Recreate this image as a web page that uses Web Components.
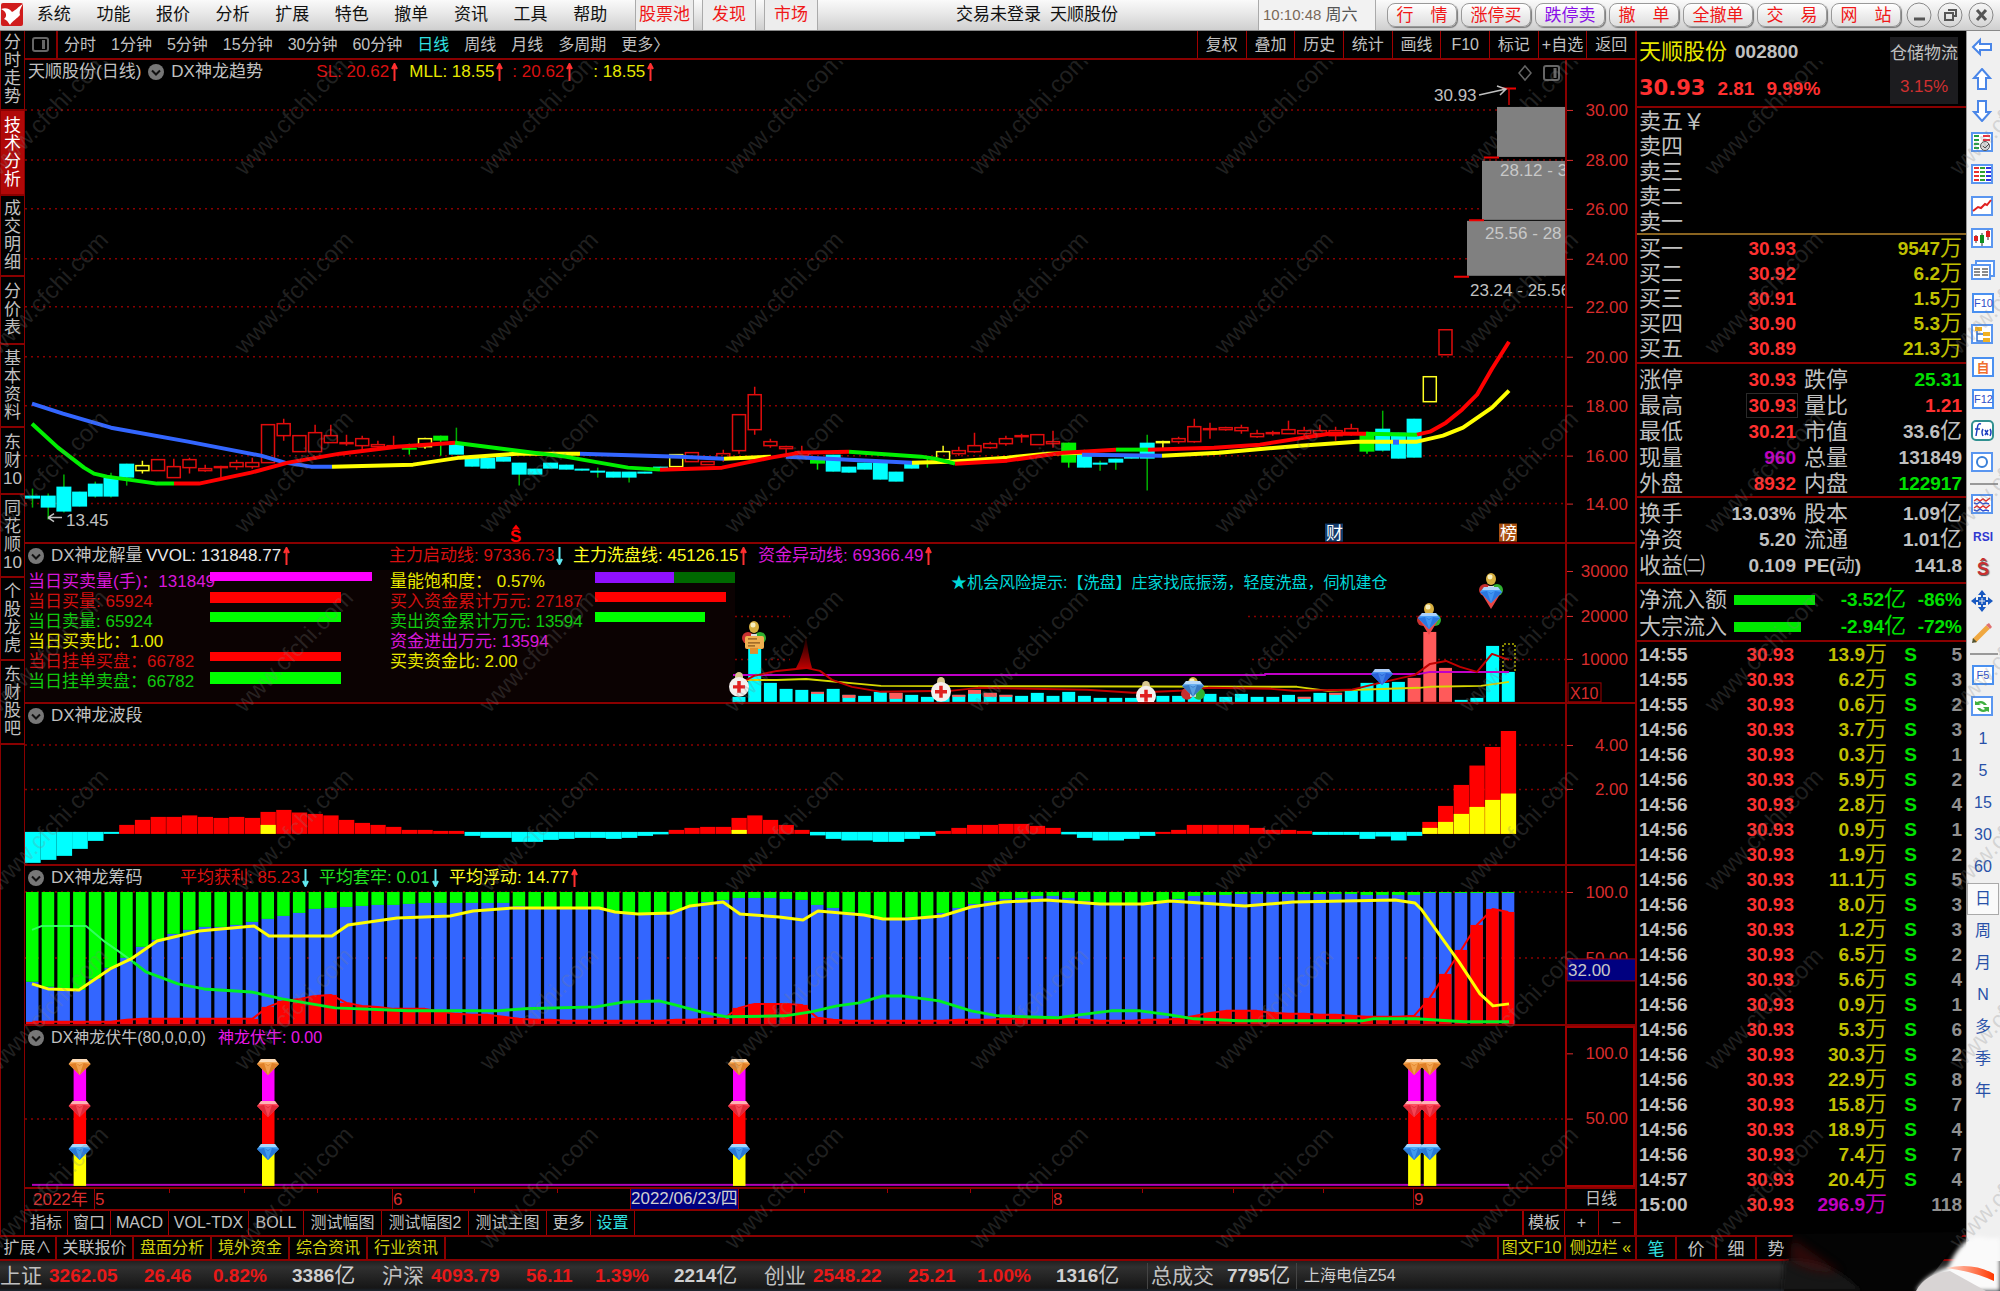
<!DOCTYPE html>
<html lang="zh-CN">
<head>
<meta charset="utf-8">
<title>天顺股份 002800 技术分析</title>
<style>
html,body{margin:0;background:#000;overflow:hidden}
body{font:16px/20px "Liberation Sans","Noto Sans CJK SC",sans-serif;color:#c0c0c0}
</style>
</head>
<body>
<trading-app></trading-app>
<script>
const BASE = `<style>
*{box-sizing:border-box}
:host{display:block;min-width:0;min-height:0}
button{font:inherit;color:inherit;background:none;border:0;padding:0;margin:0;cursor:pointer;white-space:nowrap}
svg{display:block}
table{border-collapse:collapse}td{padding:0}
</style>`;
function define(name, render){
  customElements.define(name, class extends HTMLElement{
    constructor(){ super(); this.attachShadow({mode:'open'}); }
    connectedCallback(){ this.shadowRoot.innerHTML = BASE + render(this); }
  });
}
const R = (x,y,w,h,f,extra='') => `<rect x="${x}" y="${y}" width="${w}" height="${h}" fill="${f}" ${extra}/>`;
const L = (pts,c,w=4) => `<polyline points="${pts}" fill="none" stroke="${c}" stroke-width="${w}" stroke-linejoin="round"/>`;
const X = i => 32.5 + 15.7*i;

/* ---------- title bar ---------- */
define('title-bar', () => `<style>
:host{display:flex;height:31px;flex:none;background:linear-gradient(#fafafa,#e6e6e6 50%,#cfcfcf);border-bottom:1px solid #888;color:#111;align-items:stretch;font-size:17px;line-height:24px}
.logo{width:24px;padding-top:3px}
nav{display:flex;width:596px}nav button{flex:1}
.pool{display:flex;gap:8px;margin-left:15px;color:#f01818}
.pool button{border:solid #aaa;border-width:0 1px;background:#ededed;padding:0 3px}
.pool button+button{padding:0 9px}
.mid{flex:1;display:flex;justify-content:flex-end;gap:9px;align-items:center;padding-right:140px}
.clock{width:118px;border:solid #aaa;border-width:0 1px;background:#f2f2f2;color:#7a6858;display:flex;gap:4px;align-items:center;padding-left:4px;font-size:15px}
.clock span{font-size:16px;color:#555}
.acts{display:flex;gap:4px;align-items:center;padding-left:11px;color:#f01818}
.acts button{width:70px;height:24px;border:1px solid #999;border-radius:8px;background:linear-gradient(#fff,#ddd);box-shadow:1px 1px 1px #777}
.acts .p{color:#8a10e8}
.win{display:flex;gap:5px;align-items:center;padding:0 6px 0 5px}
</style>
<div class="logo"><svg width="24" height="24"><rect x="1" width="22" height="23" rx="2" fill="#d01c1c"/><path d="M1 6c5-2 9 0 11 3 4-2 6-5 11-8-3 5-4 8-3 11-3 4-7 5-10 10-2-3-3-5-6-6 4-3 2-8-3-10z" fill="#fff"/></svg></div>
<nav>${['系统','功能','报价','分析','扩展','特色','撤单','资讯','工具','帮助'].map(t=>`<button>${t}</button>`).join('')}</nav>
<div class="pool"><button>股票池</button><button>发现</button><button>市场</button></div>
<div class="mid"><span>交易未登录</span><span>天顺股份</span></div>
<div class="clock">10:10:48<span>周六</span></div>
<div class="acts">${['行　情','涨停买','跌停卖','撤　单','全撤单','交　易','网　站'].map((t,i)=>`<button class="${i==2?'p':''}">${t}</button>`).join('')}</div>
<div class="win">${['<path d="M8 18h11" stroke-width="3"/>','<path d="M11 9h8v6h-3M8 12h8v7h-8z" stroke-width="2"/>','<path d="M9 9l9 10M18 9l-9 10" stroke-width="3"/>'].map((p,i)=>`<button aria-label="${['最小化','还原','关闭'][i]}"><svg width="26" height="28" fill="none" stroke="#555"><circle cx="13" cy="14" r="12" stroke="#888"/>${p}</svg></button>`).join('')}</div>`);

/* ---------- left tabs ---------- */
define('side-tabs', () => `<style>
:host{display:flex;flex-direction:column;width:25px;border:solid #8a0000;border-width:0 1px}
button{border-bottom:2px solid #8a0000;display:grid;place-items:center;white-space:normal;font-size:17px;line-height:18px}
button span{width:19px;word-break:normal}
.on{background:#b00808;color:#fff}
</style>${[['分时走势',80],['技术分析',85],['成交明细',81],['分价表',68],['基本资料',83],['东财10',67],['同花顺10',83],['个股龙虎',83],['东财股吧',84]].map(([t,h],i)=>`<button class="${i==1?'on':''}" style="height:${h}px"><span>${t}</span></button>`).join('')}`);

/* ---------- period bar ---------- */
define('period-bar', () => `<style>
:host{display:flex;height:29px;flex:none;border-bottom:2px solid #8a0000;align-items:stretch}
.ic{width:33px;border-right:2px solid #8a0000;padding:6px 0 0 7px}
.l{display:flex;gap:15px;padding-left:6px;flex:1}.l .on{color:#30e0e0}
.r{display:flex;width:438px}.r button{flex:1 1 auto;width:48px;border-left:1px solid #a00000}
</style><div class="ic"><svg width="17" height="16" fill="none" stroke="#666" stroke-width="2"><rect x="1" y="1" width="15" height="13" rx="2"/><path d="M11.500 3v9" stroke-width="3"/></svg></div>
<div class="l">${['分时','1分钟','5分钟','15分钟','30分钟','60分钟','日线','周线','月线','多周期','更多〉'].map(t=>`<button class="${t=='日线'?'on':''}">${t}</button>`).join('')}</div>
<div class="r">${['复权','叠加','历史','统计','画线','F10','标记','+自选','返回'].map(t=>`<button>${t}</button>`).join('')}</div>`);

/* ---------- chart drawings, in window coordinates ---------- */
const RED='#ff0000', CY='#00ffff', GR='#00f000', YE='#ffff00', BL='#3366ff', MG='#ff00ff';
function grid(ys){ return ys.map(y=>`<path d="M25 ${y}H1565" stroke="#8a0000" stroke-width="1.500" stroke-dasharray="2 4"/>`).join(''); }
function gem(cx,cy,a,b,c='#fff'){ return `<g transform="translate(${cx} ${cy})"><path d="M-7-8H7L11-3 0 8-11-3z" fill="${a}"/><path d="M-7-8H7L9-5H-9z" fill="${c}" opacity=".55"/><path d="M-11-3L0 8 11-3 4-4 0-2-4-4z" fill="${b}"/><path d="M-4-4L0 8 4-4 0-1z" fill="${a}" opacity=".7"/></g>`; }
function person(cx,cy){ return `<circle cx="${cx-6}" cy="${cy+12}" r="6" fill="#c83030"/><circle cx="${cx+6}" cy="${cy+12}" r="6" fill="#30b030"/><path d="M${cx-3} ${cy+8}h6v7h-6z" fill="#ddd"/><ellipse cx="${cx}" cy="${cy+1}" rx="5" ry="6" fill="#d8b040"/><ellipse cx="${cx-1}" cy="${cy-1}" rx="2.500" ry="2.500" fill="#f8f0c0"/>`; }
function cross(cx,cy){ return `<ellipse cx="${cx}" cy="${cy-10}" rx="4" ry="5" fill="#d8c890"/><circle cx="${cx}" cy="${cy}" r="10" fill="#f4f0ee"/><path d="M${cx-6} ${cy}h12M${cx} ${cy-6}v12" stroke="#e02020" stroke-width="3.500"/>`; }

const candles = [
[0,'c',496,499,489,508],[1,'c',496,508,494,520],[2,'c',487,512,475,513],[3,'c',492,507],[4,'c',484,497,482,498],[5,'c',478,497,473,498],[6,'c',464,478,464,486],[7,'y',466,471,461,474],[8,'r',460,471],[9,'r',467,478,459,478],[10,'r',460,468,458,474],[11,'r',469,471,465,472],[12,'r',467,468,466,478],[13,'r',463,467,460,470],[14,'r',463,467,458,469],[15,'r',425,463],[16,'r',424,436,419,441],[17,'r',436,452],[18,'r',433,452,425,452],[19,'r',436,443,425,443],[20,'r',443,444,435,446],[21,'r',439,446,436,450],[22,'r',445,447,441,450],[23,'r',446,447,436,449],[24,'g',448,450,444,455],[25,'y',439,447,438,449],[26,'g',436,441,436,456],[27,'c',443,455,428,455],[28,'c',458,467],[29,'c',458,469],[30,'c',457,462],[31,'c',463,475,463,486],[32,'c',469,475],[33,'c',463,469],[34,'c',465,470],[35,'c',469,471],[36,'c',471,473,468,478],[37,'c',472,478],[38,'c',472,478,472,483],[39,'c',472,474],[40,'c',467,469],[41,'y',455,467],[42,'r',453,462],[43,'r',462,465],[44,'r',454,459,450,462],[45,'r',415,451,415,454],[46,'r',395,430,387,435],[47,'r',442,446,439,448],[48,'r',447,449,446,454],[49,'r',452,456,446,458],[50,'g',460,464,460,470],[51,'c',455,472],[52,'c',467,473],[53,'c',463,470],[54,'c',463,480],[55,'c',472,482],[56,'c',463,469],[57,'g',462,463,459,468],[58,'y',452,460,446,460],[59,'r',451,454,447,456],[60,'r',446,452,433,453],[61,'r',444,448,442,449],[62,'r',439,444,436,446],[63,'r',436,437,434,443],[64,'r',435,445],[65,'r',442,444,431,448],[66,'g',443,463,443,468],[67,'c',455,468,450,468],[68,'c',463,465,461,471],[69,'c',459,463,459,470],[70,'c',455,459],[71,'c',443,459,435,491],[72,'y',442,443,441,450],[73,'r',439,442,437,444],[74,'r',427,442,419,443],[75,'r',429,430,423,439],[76,'r',428,430,427,431],[77,'r',428,431,425,434],[78,'r',434,437,430,438],[79,'r',433,434,431,436],[80,'r',430,434,421,434],[81,'r',431,434,427,438],[82,'r',431,434,425,436],[83,'r',431,436,427,441],[84,'r',429,434,424,436],[85,'g',433,452,432,454],[86,'c',429,451,411,452],[87,'c',433,459],[88,'c',419,458],[89,'y',377,402],[90,'r',330,355]];
function candle([i,k,t,b,wt=t,wb=b]){
  const x=X(i), c={r:'#e00c0c',y:'#ffff20',g:GR,c:CY}[k], wick=k=='c'?'#00b000':c;
  if(k=='c'||k=='g') return `<path d="M${x} ${wt}V${wb}" stroke="${wick}" stroke-width="1.500"/>`+R(x-7.5,t,15,b-t,c);
  return `<path d="M${x} ${wt}V${t}M${x} ${b}V${wb}" stroke="${c}" stroke-width="1.500"/>`+R(x-6.5,t,13,Math.max(b-t,1),'none',`stroke="${c}" stroke-width="1.500"`);
}
function priceArt(){
  let s=grid([110,160,209,259,307,357,406,456,504])+candles.map(candle).join('');
  s+=L('32,404 63,414 111,428 188,442 261,456 285,463 311,467 332,467',BL)+L('332,467 413,465 460,458 518,454 580,454',YE)+L('580,454 680,457 724,459',BL)+L('724,459 771,457',YE)+L('786,457 912,463',BL)+L('912,463 950,462 1007,458 1047,454 1082,453',YE)+L('1162,456 1219,453 1300,446 1357,442 1417,442 1443,436 1463,428 1492,408 1509,391',YE);
  s+=L('32,424 58,448 84,468 94,474 107,477 157,484 174,484',GR)+L('174,484 199,484 251,473 288,463 340,454 397,447 455,443',RED)+L('455,443 502,449 565,457 628,468 660,470',GR)+L('660,470 722,468 771,458 800,453 849,452',RED)+L('849,452 921,457 935,459 955,464',GR)+L('955,464 1007,461 1064,453 1116,450',RED)+L('1116,450 1148,450',GR)+L('1148,450 1214,448 1260,445 1329,434 1366,434',RED)+L('1366,434 1417,435',GR)+L('1417,435 1430,432 1446,423 1462,410 1477,395 1492,369 1509,342',RED)+L('1082,455 1162,456',BL)+R(1393,440,6,5,BL);
  s+=R(1497,107,68,50,'#808080')+R(1482,161,83,59,'#808080')+R(1467,221,98,55,'#808080');
  s+=`<path d="M1454 277h15M1469 220.500h15M1484 157.500h15M1502 88.500h14" stroke="#e00" stroke-width="2"/><path d="M1509 88V105" stroke="#c00" stroke-width="1.500"/>`;
  s+=`<path d="M1479 95L1506 89M1497 86l9 3-6 6M48 518H62M48 518l6-4M48 518l6 4" fill="none" stroke="#c0c0c0" stroke-width="1.500"/>`;
  s+=R(1325,524,18,18,'#123a6a')+R(1499,524,18,18,'#a85010')+`<path d="M512 530l4-5 4 5z" fill="#f00"/>`;
  s+=`<path d="M1525 66l6 7-6 7-6-7z" fill="none" stroke="#666" stroke-width="1.500"/><rect x="1544" y="66" width="15" height="14" rx="2" fill="none" stroke="#666" stroke-width="2"/><path d="M1555 68v10" stroke="#666" stroke-width="3"/>`;
  return s;
}
function volArt(){
  let s=R(25,570,710,132,'#0b0202');
  s+=`<path d="M735 616.500H790M1248 616.500H1565M735 659.500H790M1252 659.500H1565" stroke="#8a0000" stroke-width="1.500" stroke-dasharray="2 4"/>`;
  s+=`<defs><linearGradient id="fl" x1="0" x2="0" y1="0" y2="1"><stop offset="0" stop-color="#a00" stop-opacity="0"/><stop offset="1" stop-color="#b00"/></linearGradient></defs><path d="M806 634q2 20 6 34h-16q8-14 10-34z" fill="url(#fl)"/>`;
  const tops=[697,648,683,689,690,692,689,695,696,692,693,695,697,697,695,690,693,695,696,693,696,692,696,698,698,698,698,696,696,693,694,697,694,697,697,695,697,693,693,691,683,683,682,678,632,668,700,698,646,672];
  const caps={50:694,52:698,55:699,59:697,60:694,61:697,62:697,81:699,83:695};
  tops.forEach((t,j)=>{const i=j+45,x=X(i)-6.5; s+=R(x,t,13,702-t,i>=88&&i<=90?'#ff5a5a':CY); if(caps[i]) s+=R(x,t,13,caps[i]-t,'#ff5a5a');});
  s+=`<path d="M1503 671V644h12v27" fill="none" stroke="#b0b000" stroke-width="1.500" stroke-dasharray="2 2"/>`;
  s+=L('733,675 1265,675 1265,674 1420,674 1430,672 1509,672','#c000c8',2)+L('733,680 777,680 806,679 881,686 1297,687 1328,691 1419,688 1430,687 1481,686 1509,682','#d8d800',2)+L('739,684 754,676 777,671 806,668 820,671 832,680 852,687 881,692 950,691 978,688 1087,690 1133,693 1179,691 1208,688 1271,689 1294,691 1351,690 1380,683 1415,675 1430,664 1446,661 1460,667 1477,672 1492,654 1509,660','#c00000',2);
  s+=person(754,626)+R(745,636,19,13,'#f0b050','rx="2"')+R(750,648,8,6,'#e09030')+`<path d="M748 639h9M748 643h12M748 646h7" stroke="#704010"/>`;
  s+=cross(739,687)+cross(941,692)+cross(1146,696);
  const vgem=(x,y)=>`<path d="M${x-11} ${y-4}L${x} ${y+14} ${x+11} ${y-4} ${x} ${y+6}z" fill="#e84848"/>`+gem(x,y,'#4aa0f8','#2a78e0');
  s+=person(1193,682)+gem(1193,689,'#6ab0f0','#3878c0')+gem(1382,677,'#4a90f0','#2860d8')+person(1429,608)+vgem(1429,621)+person(1491,578)+vgem(1491,595);
  return s;
}
function waveArt(){
  const b=[864,861,857,850,842,835,826,821,818,818,816.5,818,819,818,819,813,811,813.6,815,816.5,821,824,826,828,831,831,832,832,837,839,839,843,843,841,840,839,839,840,839,837,835.5,831,829,828,828,819,816.5,821,826,831,836.5,840,841.6,841.6,843,843,840,837,832,829,826,826,825,825,827,829,835.5,839,841.6,841.6,840,837,833,831,826,826,826,826,829,831,831,832,836,836,836,840,837.6,841.6,837,823,807,786,766.6,748,732];
  const y={15:826,45:831,89:829,90:823,91:815,92:808,93:801,94:794.6};
  let s=grid([746,790.5]);
  b.forEach((t,i)=>{const x=X(i)-7.5; s+= t<834?R(x,t,15.3,835-t,RED):R(x,833,15.7,Math.max(t-833,2),CY); if(y[i]) s+=R(x,y[i],15.3,835-y[i],YE);});
  return s;
}
function chipArt(){
  const blue=[983,988,991,991,980,969,959,948,941,935,931,928,928,926,923,920,917,914,910,909,908,907,906,906,905,904,904,904,904,904,904,907,908,909,909,909,909,912,915,915,914,911,907,903,901,899,899,899,900,901,906,909,913,916,919,919,918,917,914,909,905,902,900,899,897,897,899,902,904,905,905,904,902,900,897,896,896,895,895,895,895,895,895,895,895,896,896,896,896,894,894,894,894,894,894];
  const red=[1023,1023,1023,1023,1023,1023,1021,1020,1020,1020,1020,1020,1020,1020,1020,1008,1002,1000,997,996,1004,1007,1008,1010,1010,1010,1013,1015,1016,1016,1018,1020,1021,1021,1022,1022,1022,1022,1022,1022,1022,1021,1021,1020,1020,1009,1005,1005,1005,1006,1019,1021,1022,1022,1022,1022,1022,1022,1022,1021,1021,1021,1020,1020,1020,1020,1020,1021,1022,1022,1022,1021,1021,1020,1017,1014,1012,1012,1012,1014,1015,1015,1016,1016,1017,1018,1018,1018,1017,999,975,951,926,910,913];
  let s=grid([893,959]);
  blue.forEach((t,i)=>{const x=X(i)-6.5; s+=R(x,893,12.5,t-893,'#00ff00')+R(x,t,12.5,1025-t,BL)+R(x,red[i],12.5,1025-red[i],RED);});
  s+=L(red.map((r,i)=>X(i)+','+r).join(' '),RED,2);
  s+=L('32,931 42,927 86,927 105,943 118,952 133,963','#30ff60',2)+L('133,963 146,973 178,985 204,990 251,993 282,1000 335,1009 408,1012 497,1012 523,1010 596,1008 625,1003 659,1002 675,1006 701,1013 727,1018 785,1017 811,1013 837,1007 859,1004 883,997 902,997 939,1002 971,1012 998,1017 1057,1019 1079,1016 1111,1012 1140,1012 1170,1016 1194,1020 1239,1022 1362,1022 1373,1020 1416,1020 1464,1023 1509,1023','#00f020',3);
  s+=L('32,985 48,990 79,991 110,970 131,960 157,942 199,932 254,927 269,937 332,937 348,926 397,919 450,917 473,912 513,909 599,909 615,913 638,915 672,914 690,907 723,903 740,915 779,918 803,921 818,912 864,916 883,920 907,920 942,917 971,908 1004,903 1046,901 1100,905 1143,905 1170,902 1245,907 1293,903 1395,901 1415,904 1421,910 1459,963 1480,995 1493,1007 1509,1005','#ffff00',3);
  return s;
}
function bullArt(){
  let s=grid([1120])+R(32,1185,1477,2,'#b000b8');
  [3,15,45,88,89].forEach(i=>{const x=X(i)-6;s+=R(x,1068,12.5,37,MG)+R(x,1105,12.5,44,RED)+R(x,1149,12.5,38,YE);});
  [3,15,45,88,89].forEach(i=>{const x=X(i);s+=gem(x,1068,'#f8b060','#e08028')+gem(x,1110,'#ff5060','#e02838')+gem(x,1153,'#4aa8f8','#2878d8');});
  return s;
}
/* axis entries: [text, y]; notes: [text, x, y, colour] */
const panels={
 price:{y:60,h:484,art:priceArt,name:'天顺股份(日线)',name2:'DX神龙趋势',cols:'145px 93px 103px 81px auto',
  vals:[['SL: 20.62','#d81010',1],['MLL: 18.55','#e8e800',1],[': 20.62','#d81010',1],[': 18.55','#e8e800',1]],
  axis:[['30.00',110],['28.00',160],['26.00',209],['24.00',259],['22.00',307],['20.00',357],['18.00',406],['16.00',456],['14.00',504]],
  notes:[['30.93',1434,95,'#c0c0c0'],['28.12 - 3',1500,170,'#c8c8c8'],['25.56 - 28',1485,233,'#c8c8c8'],['23.24 - 25.56',1470,290,'#c0c0c0'],['13.45',66,520,'#c0c0c0'],['S',510,536,'#f00'],['财',1326,533,'#fff'],['榜',1500,533,'#fff']]},
 vol:{y:544,h:161,art:volArt,name2:'DX神龙解量',cols:'95px 243px 184px 185px auto',
  vals:[['VVOL: 131848.77','#e8e8e8',1],['主力启动线: 97336.73','#d81010',-1],['主力洗盘线: 45126.15','#ffff20',1],['资金异动线: 69366.49','#d818d8',1]],
  axis:[['30000',571],['20000',616],['10000',659]],notes:[['★机会风险提示:【洗盘】庄家找底振荡，轻度洗盘，伺机建仓',951,582,'#00d8d8']]},
 wave:{y:705,h:162,art:waveArt,name2:'DX神龙波段',cols:'auto',vals:[],axis:[['4.00',746],['2.00',790]],notes:[]},
 chip:{y:867,h:160,art:chipArt,name2:'DX神龙筹码',cols:'129px 139px 130px auto',
  vals:[['平均获利: 85.23','#d81010',-1],['平均套牢: 0.01','#20e020',-1],['平均浮动: 14.77','#ffff20',1]],
  axis:[['100.0',893],['50.00',959]],notes:[]},
 bull:{y:1027,h:163,art:bullArt,name2:'DX神龙伏牛(80,0,0,0)',cols:'167px auto',vals:[['神龙伏牛: 0.00','#e818e8',0]],axis:[['100.0',1053],['50.00',1120]],notes:[]}
};
const arrow=d=>d?`<svg width="9" height="18" fill="none" stroke="${d>0?'#ff3030':'#60e8f0'}" stroke-width="2"><path d="${d>0?'M4.500 18V2M2 6l2.500-5 2.500 5':'M4.500 0V16M2 12l2.500 5 2.500-5'}"/></svg>`:'';
const chev=`<svg width="16" height="16"><circle cx="8" cy="8" r="8" fill="#777"/><path d="M4 6.500l4 4 4-4" fill="none" stroke="#111" stroke-width="2"/></svg>`;
define('chart-panel', el => {
  const kind=el.getAttribute('kind'), p=panels[kind], H=p.h-2, pc=y=>((y-p.y)/H*100).toFixed(3)+'%', px=x=>((x-25)/1540*100).toFixed(3)+'%';
  return `<style>
:host{display:flex;flex:${p.h} 1 ${p.h}px;border-bottom:2px solid #8a0000}
.plot{flex:1;min-width:0;display:grid;grid-template:100%/100%;overflow:hidden}
.plot>*{grid-area:1/1;min-height:0;min-width:0}
.plot svg.fill{width:100%;height:100%}
header{display:grid;align-self:start;height:24px;align-items:center;grid-template-columns:auto ${p.cols};justify-content:start;padding-left:3px;font-size:${kind=='bull'?16:17}px}
header .t{display:flex;gap:7px;align-items:center;white-space:nowrap;padding-right:7px}
header .n{white-space:nowrap}
header .v{display:flex;gap:1px;align-items:center;white-space:nowrap}
.axis{width:70px;flex:none;border-left:2px solid #8a0000;${kind=='bull'?'border:2px solid #a00000;':''}}
.axis svg{width:100%;height:100%}
</style><div class="plot">
<svg class="fill" viewBox="25 ${p.y} 1540 ${H}" preserveAspectRatio="none" aria-hidden="true">${p.art()}</svg>
<svg class="fill" font-size="${kind=='vol'?16:17}">${p.notes.map(([t,x,y,c])=>`<text x="${px(x)}" y="${pc(y+6)}" fill="${c}" ${t=='S'?'font-weight="bold"':''}>${t}</text>`).join('')}</svg>
${kind=='vol'?'<fund-flow></fund-flow>':''}
<header><div class="t">${p.name?`<span>${p.name}</span>`:''}${chev}</div><div class="n">${p.name2}</div>${p.vals.map(([t,c,d])=>`<div class="v" style="color:${c}">${t}${arrow(d)}</div>`).join('')}</header>
</div>
<div class="axis"><svg font-size="17" fill="#d82c2c">${p.axis.map(([t,y])=>`<text x="61" y="${pc(y+6)}" text-anchor="end">${t}</text><rect x="0" y="${pc(y)}" width="6" height="1"/>`).join('')}
${kind=='vol'?`<rect x="1" y="${pc(683)}" width="33" height="19" fill="none" stroke="#a00000"/><text x="3" y="${pc(699)}" font-size="16">X10</text>`:''}
${kind=='chip'?`<rect x="0" y="${pc(960)}" width="70" height="22" fill="#000080" stroke="#a00000"/><text x="1" y="${pc(977)}" fill="#c8c8c8">32.00</text>`:''}
</svg></div>`;
});
define('fund-flow', () => {
  const rows=[
  ['当日买卖量(手)：131849','#d818d8',[[162,9,MG]],'量能饱和度： 0.57%','#e8e800',[[79,11,'#9010ff'],[61,11,'#006800']]],
  ['当日买量: 65924','#d01010',[[131,11,'#f00']],'买入资金累计万元: 27187','#d01010',[[131,10,'#f00']]],
  ['当日卖量: 65924','#10c810',[[131,10,'#0f0']],'卖出资金累计万元: 13594','#10c810',[[110,10,'#0f0']]],
  ['当日买卖比：1.00','#e8e800',[],'资金进出万元: 13594','#d818d8',[]],
  ['当日挂单买盘：66782','#d01010',[[131,9,'#f00']],'买卖资金比: 2.00','#e8e800',[]],
  ['当日挂单卖盘：66782','#10c810',[[131,12,'#0f0']],'','#fff',[]]];
  const bars=b=>`<div class="b">${b.map(([w,h,c])=>`<i style="width:${w}px;height:${h}px;background:${c}"></i>`).join('')}</div>`;
  return `<style>:host{align-self:start;padding:28px 0 0 3px;font-size:17px}
.r{display:grid;grid-template-columns:182px 180px 205px 140px;height:20px;white-space:nowrap}
.b{display:flex}.r span{min-width:0}</style>`+rows.map(r=>`<div class="r"><span style="color:${r[1]}">${r[0]}</span>${bars(r[2])}<span style="color:${r[4]}">${r[3]}</span>${bars(r[5])}</div>`).join('');
});

define('date-axis', () => { const p=x=>((x-25)/1540*100).toFixed(3)+'%';
 return `<style>:host{display:flex;height:22px;flex:none;border-bottom:2px solid #8a0000}
svg{flex:1;height:20px;min-width:0}.d{width:70px;text-align:center;border-left:2px solid #8a0000}</style>
<svg font-size="17" fill="#d82c2c"><rect x="${p(630)}" y="0" width="108" height="20" fill="#000080"/>
${[94,392,630,738,1052,1413].map(x=>`<rect x="${p(x)}" width="1" height="20" fill="#a00000"/>`).join('')}
${[169,244,317,474,557,804,887,970,1142,1233,1323].map(x=>`<rect x="${p(x)}" width="1" height="4" fill="#a00000"/>`).join('')}
<text x="${p(33)}" y="16">2022年</text><text x="${p(95)}" y="16">5</text><text x="${p(393)}" y="16">6</text><text x="${p(631)}" y="15" fill="#d0d0d0">2022/06/23/四</text><text x="${p(1053)}" y="16">8</text><text x="${p(1414)}" y="16">9</text></svg><div class="d">日线</div>`;});

define('indicator-tabs', () => `<style>:host{display:flex;height:24px;flex:none}
button{border-right:1px solid #a00000;flex:none}.sp{flex:1}.on{color:#30e0e0}.m{border-left:2px solid #a00000}</style>
${[['指标',43],['窗口',43],['MACD',58],['VOL-TDX',80],['BOLL',55],['测试幅图',78],['测试幅图2',87],['测试主图',78],['更多',44],['设置',44]].map(([t,w])=>`<button class="${t=='设置'?'on':''}" style="width:${w}px">${t}</button>`).join('')}<span class="sp"></span>
<button class="m" style="width:43px">模板</button><button style="width:34px">+</button><button style="width:36px">−</button>`);
define('ext-bar', () => `<style>:host{display:flex;height:26px;flex:none;border:solid #8a0000;border-width:2px 0}
button{border-right:2px solid #8a0000;flex:none;color:#d0d010}.g{color:#c0c0c0}.sp{flex:1}.m{border-left:2px solid #8a0000}</style>
${[['扩展∧',57],['关联报价',77],['盘面分析',78],['境外资金',78],['综合资讯',78],['行业资讯',78]].map(([t,w],i)=>`<button class="${i<2?'g':''}" style="width:${w}px">${t}</button>`).join('')}<span class="sp"></span><button class="m" style="width:69px">图文F10</button><button style="width:69px;border:0">侧边栏 «</button>`);

/* ---------- quote column ---------- */
define('quote-panel', () => {
 const ticks=`14:55 13.9 5|14:55 6.2 3|14:55 0.6 2|14:56 3.7 3|14:56 0.3 1|14:56 5.9 2|14:56 2.8 4|14:56 0.9 1|14:56 1.9 2|14:56 11.1 5|14:56 8.0 3|14:56 1.2 3|14:56 6.5 2|14:56 5.6 4|14:56 0.9 1|14:56 5.3 6|14:56 30.3 2|14:56 22.9 8|14:56 15.8 7|14:56 18.9 4|14:56 7.4 7|14:57 20.4 4|15:00 296.9 118`.split('|').map(r=>r.split(' '));
 const c={r:'#ff3030',g:'#00e000',y:'#c0c000',w:'#c0c0c0',m:'#c000c0'};
 const st=(rows)=>`<table class="s">${rows.map(([a,b,bc,d,e,ec])=>`<tr><td class="k">${a}</td><td class="v" style="color:${c[bc]}">${b}</td><td class="k2">${d}</td><td class="v" style="color:${c[ec]}">${e}</td></tr>`).join('')}</table>`;
 return `<style>
:host{display:flex;flex-direction:column;width:331px;flex:none;border-left:2px solid #8a0000;font-size:19px;line-height:25px}
.k,.k2,u{font-size:22px;font-weight:400;text-decoration:none}
u{line-height:0}
.hd{display:flex;justify-content:space-between;height:77px;border-bottom:2px solid #8a0000;padding:6px 8px 0 2px}
.n{display:flex;gap:8px;align-items:center;height:28px}.n b{font-size:22px;font-weight:400;color:#e8e800}.n span{font-weight:700}
.p{display:flex;gap:12px;align-items:center;color:#ff3030;margin-top:11px;font-weight:700}.p b{font:bold 21px/25px "DejaVu Sans"}
.ind{width:68px;height:67px;background:#1c1c1f;font-size:17px;text-align:center;line-height:33px}.ind i{font-style:normal;color:#d03030;display:block}
table{width:100%;table-layout:fixed}td{height:25px;white-space:nowrap}
.k,.k2{line-height:25px}
.v{text-align:right;font-weight:700}
.sell{padding:1px 4px 0 2px;border-bottom:2px solid #8a6420;height:127px}
.buy{padding:1px 4px 0 2px;border-bottom:2px solid #8a0000;height:129px}
.sec{padding:2px 4px 0 2px;border-bottom:2px solid #8a0000}
.six{padding-bottom:4px}
.s td{height:26px}.s .k2{padding-left:8px}
.s td:nth-child(1){width:85px}.s td:nth-child(2){width:72px}.s td:nth-child(3){width:74px}
.nf{display:flex;align-items:center;height:27px;color:#00e000;font-weight:700}.nf .k{width:95px;color:#c0c0c0}.nf i{height:10px;background:#00e800}.nf b{margin-left:auto}.nf em{width:56px;text-align:right;font-style:normal}
.t{font-weight:700}.t td{text-align:right}
.tabs{margin-top:auto;display:flex;height:26px;flex:none;border:solid #8a0000;border-width:2px 0;font-size:17px}
.tabs button{width:40px;border-right:2px solid #8a0000}.tabs button:last-child{border:0;width:38px}.tabs .on{color:#30e0e0}
</style>
<div class="hd"><div><div class="n"><b>天顺股份</b><span>002800</span></div><div class="p"><b>30.93</b><span>2.81</span><span>9.99%</span></div></div><div class="ind">仓储物流<i>3.15%</i></div></div>
<div class="sell"><table>${['卖五￥','卖四','卖三','卖二','卖一'].map(t=>`<tr><td class="k">${t}</td></tr>`).join('')}</table></div>
<div class="buy"><table>${[['一','93','9547'],['二','92','6.2'],['三','91','1.5'],['四','90','5.3'],['五','89','21.3']].map(([n,p,a])=>`<tr><td class="k" style="width:60px">买${n}</td><td class="v" style="color:${c.r};width:97px">30.${p}</td><td class="v" style="color:${c.y}">${a}<u>万</u></td></tr>`).join('')}</table></div>
<div class="sec">${st([['涨停','30.93','r','跌停','25.31','g'],['最高','<span style="outline:1px solid #2a2a2a;outline-offset:1px">30.93</span>','r','量比','1.21','r'],['最低','30.21','r','市值','33.6<u>亿</u>','w'],['现量','960','m','总量','131849','w'],['外盘','8932','r','内盘','122917','g']])}</div>
<div class="sec six">${st([['换手','13.03%','w','股本','1.09<u>亿</u>','w'],['净资','5.20','w','流通','1.01<u>亿</u>','w'],['收益㈡','0.109','w','<span style="font-size:19px"><b>PE(</b>动<b>)</b></span>','141.8','w']])}</div>
<div class="sec"><div class="nf"><span class="k">净流入额</span><i style="width:81px"></i><b>-3.52<u>亿</u></b><em>-86%</em></div><div class="nf"><span class="k">大宗流入</span><i style="width:67px"></i><b>-2.94<u>亿</u></b><em>-72%</em></div></div>
<div style="padding:0 4px 0 2px"><table class="t">${ticks.map(([t,a,n],i)=>`<tr><td style="text-align:left;width:60px">${t}</td><td style="color:${c.r};width:95px">30.93</td><td style="color:${i==22?c.m:c.y};width:93px">${a}<u>万</u></td><td style="color:#00e000;width:30px">${i==22?'':'S'}</td><td style="color:#909090">${n}</td></tr>`).join('')}</table></div>
<div class="tabs"><button class="on">笔</button><button>价</button><button>细</button><button>势</button></div>`;
});

/* ---------- right tool rail ---------- */
define('tool-rail', () => {
 const box='<rect x="1" y="1" width="20" height="18" fill="#fff" stroke="#5a96f0" stroke-width="2"/>';
 const ic=(n,p)=>`<button aria-label="${n}"><svg width="24" height="22" viewBox="0 0 24 22" fill="none">${p}</svg></button>`;
 const tx=(t,c='#3050c8')=>`<button class="bx" style="color:${c}">${t}</button>`;
 const n=t=>`<button>${t}</button>`;
 const rows=(x,c)=>[4,8,12,16].map(y=>`<path d="M${x} ${y}h5" stroke="${c}" stroke-width="2"/>`).join('');
 return `<style>:host{display:flex;flex-direction:column;width:34px;flex:none;background:#f0f0f0;border-left:1px solid #999;color:#2850a8;font-size:16px;font-weight:400;line-height:20px}
button{height:32px;display:grid;place-items:center;width:32px;flex:none}hr{width:28px;height:2px;margin:4px 0 4px 3px;border:0;background:#999;flex:none}
.bx{width:22px;height:20px;margin:6px 5px;background:#fff;border:2px solid #4a90f0;font-size:11px;line-height:15px}
.zi{font-weight:700;font-size:13px}
.sel{background:#fafafa;border:1px solid #aaa}</style>
${ic('后退','<path d="M2 11l7-7v4h11v6H9v4z" fill="#fff" stroke="#4a86e8" stroke-width="2"/>')}
${ic('上','<path d="M11 1l8 9h-4v11H7V10H3z" fill="#fff" stroke="#4a86e8" stroke-width="2"/>')}
${ic('下','<path d="M11 21l8-9h-4V1H7v11H3z" fill="#fff" stroke="#4a86e8" stroke-width="2"/>')}
${ic('报价',box+rows(3,'#20a040')+'<path d="M12 4h7M12 8h7" stroke="#e83040" stroke-width="2"/><circle cx="14" cy="14" r="4.500" fill="#ddd" stroke="#555"/><path d="M12 14l2 2 4-4" stroke="#444"/>')}
${ic('列表',box+rows(3,'#e83030')+rows(9,'#30a030')+rows(15,'#3030e0'))}
${ic('分时图',box+'<path d="M2 15l5-4 3 1 4-4 2 1 4-5" stroke="#e02020" stroke-width="2"/>')}
${ic('K线图',box+'<path d="M5 7v8M11 5v13M17 2v10" stroke="#333"/><path d="M5 8v5M17 3v6" stroke="#e02020" stroke-width="4"/><path d="M11 7v8" stroke="#109020" stroke-width="4"/>')}
${ic('多窗口','<rect x="5" y="1" width="18" height="15" fill="#fff" stroke="#5a96f0" stroke-width="2"/><rect x="1" y="5" width="18" height="14" fill="#fff" stroke="#5a96f0" stroke-width="2"/><path d="M3 9h6M11 9h6M3 12h6M11 12h6M3 15h6M11 15h6" stroke="#666" stroke-width="1.500"/>')}
${tx('F10')}
${ic('结构',box+'<path d="M6 6v11h6M6 10h6" stroke="#3070d0" stroke-width="1.500"/><path d="M4 3h7v4H4zM12 8h7v4h-7zM12 14h7v4h-7z" fill="#f0b020"/>')}
<button class="bx zi" style="color:#f07030">自</button>${tx('F12')}
${ic('公式','<rect x="1" y="1" width="21" height="19" rx="4" fill="#fff" stroke="#309090" stroke-width="2"/><path d="M10 4q-3-1-3.500 3L5 16M4 9h5M12 9q-2 3 0 7M14 10l3 5M17 10l-3 5M19 9q2 3 0 7" stroke="#2040c0" stroke-width="1.500"/>')}
${ic('圆',box+'<circle cx="11" cy="10" r="5" stroke="#3a80d8" stroke-width="2"/>')}
<hr>
${ic('波形',box+'<path d="M3 7l3-2 3 2 3-2 3 2 4-3M3 14l3-2 3 2 3-2 3 2 4-3" stroke="#e03030" stroke-width="1.500"/><path d="M3 9l3 1 3-2 3 2 3-1 3 1M3 16l3 1 3-2 3 2 3-1 3 1" stroke="#3050d0" stroke-width="1.500"/>')}
<button style="font:bold 12px/20px 'Liberation Sans';color:#3038d0">RSI</button>
<button style="font:bold 18px/22px 'Liberation Sans';color:#c83030;text-shadow:1px 1px 1px #555">Ŝ</button>
${ic('移动','<path d="M11 0l4 5H7zM11 22l4-5H7zM0 11l5-4v8zM22 11l-5-4v8z" fill="#1858c0"/><path d="M11 4v14M4 11h14" stroke="#1858c0" stroke-width="2"/><rect x="7" y="7" width="8" height="8" fill="#1858c0"/><path d="M11 8v6M8 11h6" stroke="#f0f0f0"/>')}
${ic('画笔','<path d="M3 19L17 5" stroke="#f0a840" stroke-width="5"/><path d="M15 3l4 4 2-2-3-4z" fill="#e07070"/><path d="M1 21l1-5 4 4z" fill="#553"/>')}
<hr>
${tx('F5')}
${ic('刷新',box+'<path d="M4 9V5l2 1q6-3 10 3h-3q-3-3-5-1l2 1zM18 11v5l-2-1q-6 3-10-3h3q3 3 5 1l-2-2z" fill="#40b040"/>')}
${['1','5','15','30','60'].map(n).join('')}<button class="sel">日</button>${['周','月','N','多','季','年'].map(n).join('')}`;
});

/* ---------- status bar ---------- */
define('status-bar', () => `<style>:host{display:flex;height:30px;flex:none;align-items:center;background:linear-gradient(#202020,#303030 20%,#161616 90%,#1c2630);white-space:nowrap}
dl{display:flex;margin:0;align-items:center;font-size:21px;line-height:26px}dt{width:49px}dd{margin:0;font-size:19px;font-weight:700;color:#e81818}
dl.i{width:382px}dd:nth-of-type(1){width:95px}dd:nth-of-type(2){width:69px}dd:nth-of-type(3){width:79px}
dd.a{color:#d0d0d0}u{font-size:21px;line-height:0;font-weight:400;text-decoration:none}
dl.z{margin-left:1px;border:solid #444;border-width:0 1px;padding-left:3px;width:150px}dl.z dt{width:76px}dl.z dd{width:auto}
p{margin:0 0 0 7px;color:#d0d0d0}</style>
${[['上证','3262.05','26.46','0.82%','3386'],['沪深','4093.79','56.11','1.39%','2214'],['创业','2548.22','25.21','1.00%','1316']].map(r=>`<dl class="i"><dt>${r[0]}</dt><dd>${r[1]}</dd><dd>${r[2]}</dd><dd>${r[3]}</dd><dd class="a">${r[4]}<u>亿</u></dd></dl>`).join('')}
<dl class="z"><dt>总成交</dt><dd class="a">7795<u>亿</u></dd></dl><p>上海电信Z54</p>`);

/* ---------- corner brush stroke and site mark ---------- */
define('corner-smear', () => `<style>:host{position:absolute;right:0;bottom:0;pointer-events:none}</style>
<svg width="240" height="121" viewBox="0 0 240 121"><defs><filter id="b" x="-20%" y="-20%" width="140%" height="140%"><feGaussianBlur stdDeviation="2"/></filter><filter id="c" x="-30%" y="-40%" width="160%" height="180%"><feGaussianBlur stdDeviation="5"/></filter>
<linearGradient id="r" x1="0" x2="1"><stop offset="0" stop-color="#ffd8cc"/><stop offset="1" stop-color="#ff3800"/></linearGradient></defs>
<path d="M33 64L24 121H160L205 62z" fill="#040404"/><path d="M24 90q40-6 78 31H22z" fill="#141617" filter="url(#b)"/><path d="M30 90q20 14 50 12L32 68z" fill="#4a0c08" opacity=".6" filter="url(#c)"/>
<path d="M240 68H226Q205 60 188 97 165 105 156 121H240z" fill="#fafafa" filter="url(#b)"/><path d="M156 121q10-18 34-20l36 20z" fill="#d8d4d4"/><path d="M186 98q28-6 48 6v7q-22-10-48-13z" fill="url(#r)"/></svg>`);
define('site-mark', () => { let s='';
 for(let r=0;r<7;r++) for(let k=-1;k<8;k++){ const x=243+245*k,y=175+179*r; s+=`<text transform="translate(${x} ${y}) rotate(-46)" y="2">www.cfchi.com</text>`; }
 return `<style>:host{position:absolute;inset:61px 0 0 0;overflow:hidden;pointer-events:none}</style><svg width="100%" height="100%" font-size="24" fill="#808080" fill-opacity=".25"><g transform="translate(0 -61)">${s}</g></svg>`;});

define('trading-app', () => `<style>
:host{display:flex;flex-direction:column;height:100vh;position:relative;overflow:hidden}
main{flex:1;display:flex;min-height:0}.left{flex:1;display:flex;flex-direction:column;min-width:0}
.top{flex:1;display:flex;min-height:0}.charts{flex:1;display:flex;flex-direction:column;min-width:0}
</style><title-bar></title-bar><main><div class="left"><div class="top"><side-tabs></side-tabs><div class="charts"><period-bar></period-bar>
<chart-panel kind="price"></chart-panel><chart-panel kind="vol"></chart-panel><chart-panel kind="wave"></chart-panel><chart-panel kind="chip"></chart-panel><chart-panel kind="bull"></chart-panel>
<date-axis></date-axis><indicator-tabs></indicator-tabs></div></div><ext-bar></ext-bar></div><quote-panel></quote-panel><tool-rail></tool-rail></main><status-bar></status-bar><corner-smear></corner-smear><site-mark></site-mark>`);
</script>
</body>
</html>
